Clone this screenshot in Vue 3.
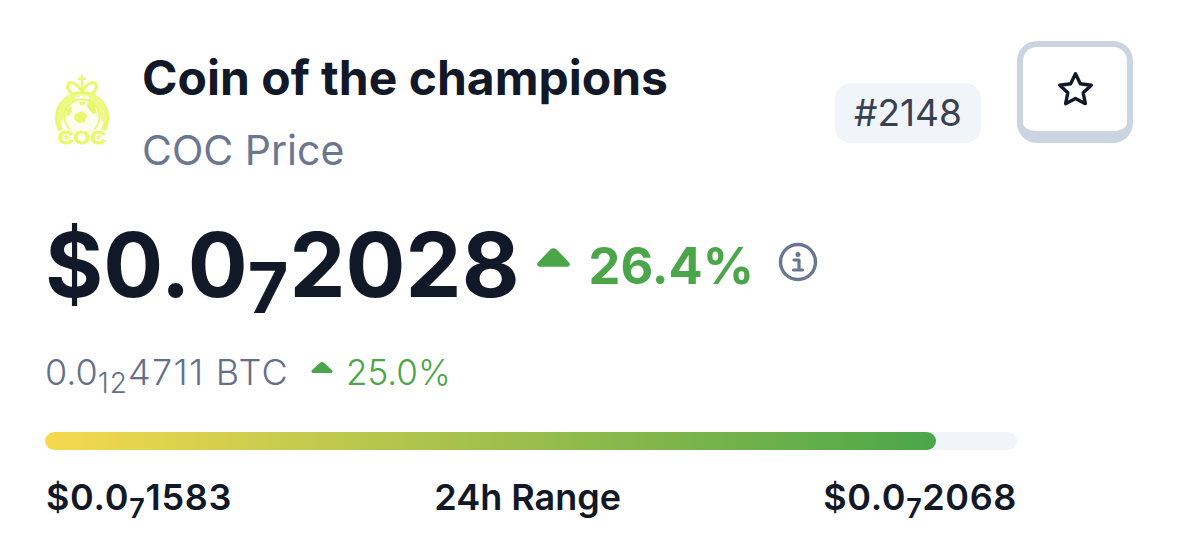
<script setup>
const pct = 91.7
</script>

<template>
  <main class="card">
    <header class="head">
      <svg class="logo" viewBox="0 0 58 74" aria-hidden="true">
        <g fill="none" stroke="#e9f86a" stroke-width="3" stroke-linejoin="round">
          <path d="M20 20 C13 16 15 7 21 10 C25 11 27 14 30 18 C33 14 35 11 39 10 C45 7 47 16 40 20" />
          <path d="M30 2 V17 M26 6 H34" stroke-width="2.200" />
          <circle cx="30" cy="45" r="24.500" stroke-width="5" />
          <path d="M8 34 Q30 10 52 34" stroke="#f3fba8" stroke-width="2" />
        </g>
        <path d="M5 48 Q6 24 22 21 L24 28 Q12 32 11 48Z M55 48 Q54 24 38 21 L36 28 Q48 32 49 48Z" fill="#eefa87" />
        <circle cx="30" cy="44" r="17.500" fill="#fdfef0" stroke="#e9f86a" stroke-width="1.800" />
        <path fill="#e9f86a" d="M23 41l7 -3 5 4 -2 7 -7 1 -4 -4z M37 29l6 4 2 7 -4 1 -5 -6 -1 -4z M15 37l4 -4 1 5 -3 5 -3 -1z M27 29h7l-2 3h-4z" />
        <text x="30" y="71" text-anchor="middle" textLength="48" lengthAdjust="spacingAndGlyphs" class="logo-halo">COC</text>
        <text x="30" y="71" text-anchor="middle" textLength="48" lengthAdjust="spacingAndGlyphs" class="logo-text">COC</text>
      </svg>
      <div class="names">
        <h1>Coin of the champions</h1>
        <p>COC Price</p>
      </div>
      <span class="rank">#2148</span>
      <button class="star" aria-label="Favourite">
        <svg viewBox="0 0 24 24" width="43" height="43" fill="none" stroke="#111827" stroke-width="1.900" stroke-linejoin="round">
          <path d="M12 3.200l2.700 5.600 6.100.8-4.500 4.200 1.200 6.100L12 17l-5.500 2.900 1.200-6.100-4.500-4.200 6.100-.8z" />
        </svg>
      </button>
    </header>

    <section class="price-row">
      <span class="price">$0.0<sub>7</sub>2028</span>
      <svg class="caret" viewBox="0 0 36 20" width="35" height="20"><path d="M14.500 1.500a5 5 0 0 1 7 0l12.500 13c1.500 1.800.6 4.500-1.800 4.500H3.800C1.400 19 .5 16.300 2 14.500z" fill="#4ba64a" /></svg>
      <span class="change">26.4%</span>
      <svg class="info" viewBox="0 0 40 40" width="40" height="40" fill="none">
        <circle cx="20" cy="20" r="17.500" stroke="#6b7690" stroke-width="3.400" />
        <circle cx="20" cy="12.500" r="2.500" fill="#6b7690" />
        <path d="M16 18h5v9M15.500 28h9" stroke="#6b7690" stroke-width="3.200" stroke-linecap="round" stroke-linejoin="round" />
      </svg>
    </section>

    <section class="btc-row">
      <span class="btc">0.0<sub>12</sub><span class="wide">4711 BTC</span></span>
      <svg class="caret-sm" viewBox="0 0 24 13" width="22" height="12"><path d="M9.500 1a4 4 0 0 1 5 0l8.500 8c1 1.200.4 3-1.200 3H2.200C.6 12 0 10.200 1 9z" fill="#4ba64a" /></svg>
      <span class="btc-change">25.0%</span>
    </section>

    <div class="track"><div class="fill" :style="{ width: pct + '%' }"></div></div>

    <footer class="range">
      <span class="num low">$0.0<sub>7</sub>1583</span>
      <span>24h Range</span>
      <span class="num">$0.0<sub>7</sub>2068</span>
    </footer>
  </main>
</template>

<style scoped>
.card {
  width: 1179px;
  height: 550px;
  box-sizing: border-box;
  padding: 41px 46px 0 45px;
  background: #fff;
  font-family: Inter, "Liberation Sans", sans-serif;
  color: #111827;
  overflow: hidden;
}
.head {
  display: flex;
  align-items: flex-start;
  height: 143px;
}
.logo {
  width: 58px;
  height: 74px;
  margin: 32px 32px 0 7px;
  flex: none;
  overflow: visible;
}
.logo-halo,
.logo-text {
  font-family: "Liberation Sans", sans-serif;
  font-size: 19px;
  font-weight: 700;
}
.logo-halo {
  fill: #fff;
  stroke: #fff;
  stroke-width: 4px;
  stroke-linejoin: round;
}
.logo-text {
  fill: #e9f86a;
  stroke: #e9f86a;
  stroke-width: 0.8px;
}
.names { flex: 1; padding-top: 8px; }
h1 {
  margin: 0;
  font-size: 48px;
  line-height: 58px;
  font-weight: 700;
}
.names p {
  margin: 18px 0 0;
  font-size: 41px;
  line-height: 50px;
  color: #6b7690;
}
.rank {
  margin: 42px 36px 0 0;
  width: 146px;
  height: 60px;
  border-radius: 16px;
  background: #f1f4f8;
  color: #374151;
  font-size: 37px;
  font-weight: 400;
  line-height: 60px;
  text-align: center;
}
.star {
  width: 116px;
  height: 102px;
  padding: 0;
  box-sizing: border-box;
  border: 6px solid #cbd5e1;
  border-bottom-width: 12px;
  border-radius: 20px;
  background: #fff;
  display: flex;
  align-items: center;
  justify-content: center;
}
.price-row {
  display: flex;
  align-items: center;
  height: 100px;
  margin-top: 31px;
}
.price {
  font-size: 89px;
  line-height: 100px;
  font-weight: 700;
}
.price sub { font-size: 70px; line-height: 0; vertical-align: -16px; letter-spacing: 1px; }
.caret { margin: 0 18px 0 16px; position: relative; top: -7px; }
.change { font-size: 50.5px; font-weight: 700; color: #4ba64a; }
.info { margin-left: 24px; position: relative; top: -3px; }
.btc-row {
  display: flex;
  align-items: center;
  height: 46px;
  margin-top: 34px;
}
.btc { font-size: 36px; color: #64708a; font-weight: 300; }
.btc sub { font-size: 28px; line-height: 0; vertical-align: -8px; letter-spacing: 1px; }
.wide { letter-spacing: 1.3px; }
.caret-sm { margin: 0 13px 0 22px; position: relative; top: -4px; }
.btc-change { font-size: 35px; color: #4ba64a; font-weight: 300; }
.track {
  width: 972px;
  height: 18px;
  margin-top: 37px;
  border-radius: 9px;
  background: #f1f4f8;
  overflow: hidden;
}
.fill {
  height: 100%;
  border-radius: 9px;
  background: linear-gradient(90deg, #f6d94e, #4ba64a);
}
.range {
  width: 972px;
  display: flex;
  justify-content: space-between;
  margin-top: 25px;
  font-size: 36px;
  line-height: 44px;
  font-weight: 600;
}
.num { letter-spacing: 0.6px; }
.low { padding-left: 1px; letter-spacing: 0.7px; }
.range sub { font-size: 27px; line-height: 0; vertical-align: -8px; }
</style>
